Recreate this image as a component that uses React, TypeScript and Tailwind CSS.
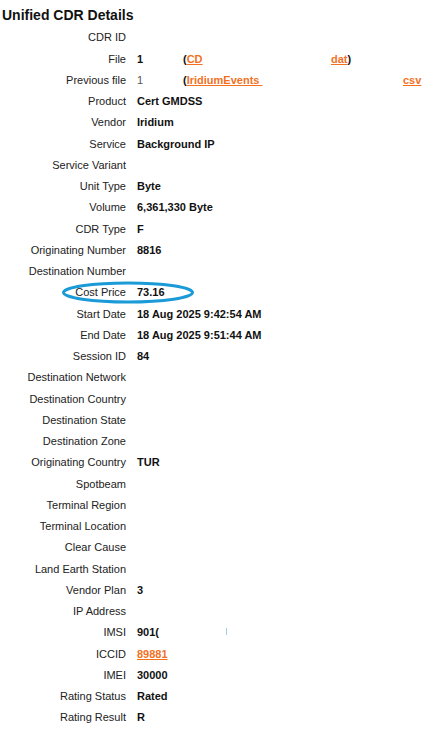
import type { ReactNode } from "react"

type Row = { label: string; value?: ReactNode; ring?: boolean; mark?: boolean }

const link = "text-[#f2711f] underline underline-offset-1 font-bold"

const rows: Row[] = [
    { label: "CDR ID" },
    {
        label: "File",
        value: (
            <>
                <span className="inline-block w-[46px]">1</span>
                <span className="inline-block w-[148px]">
                    (<span className={link}>CD</span>
                </span>
                <span className={link}>dat</span>)
            </>
        ),
    },
    {
        label: "Previous file",
        value: (
            <>
                <span className="inline-block w-[46px] font-normal text-[#555]">1</span>
                <span className="inline-block w-[220px]">
                    (<span className={link}>IridiumEvents&nbsp;</span>
                </span>
                <span className={link}>csv</span>
            </>
        ),
    },
    { label: "Product", value: "Cert GMDSS" },
    { label: "Vendor", value: "Iridium" },
    { label: "Service", value: "Background IP" },
    { label: "Service Variant" },
    { label: "Unit Type", value: "Byte" },
    { label: "Volume", value: "6,361,330 Byte" },
    { label: "CDR Type", value: "F" },
    { label: "Originating Number", value: "8816" },
    { label: "Destination Number" },
    { label: "Cost Price", value: "73.16", ring: true },
    { label: "Start Date", value: "18 Aug 2025 9:42:54 AM" },
    { label: "End Date", value: "18 Aug 2025 9:51:44 AM" },
    { label: "Session ID", value: "84" },
    { label: "Destination Network" },
    { label: "Destination Country" },
    { label: "Destination State" },
    { label: "Destination Zone" },
    { label: "Originating Country", value: "TUR" },
    { label: "Spotbeam" },
    { label: "Terminal Region" },
    { label: "Terminal Location" },
    { label: "Clear Cause" },
    { label: "Land Earth Station" },
    { label: "Vendor Plan", value: "3" },
    { label: "IP Address" },
    { label: "IMSI", value: "901(", mark: true },
    { label: "ICCID", value: <span className={link}>89881</span> },
    { label: "IMEI", value: "30000" },
    { label: "Rating Status", value: "Rated" },
    { label: "Rating Result", value: "R" },
]

export default function App() {
    return (
        <div
            className="w-[422px] h-[729px] overflow-hidden bg-white text-[#222]"
            style={{ fontFamily: "'Liberation Sans', Arial, sans-serif" }}
        >
            <h1 className="pl-[2px] pt-[5px] h-[27px] text-[14px] font-bold leading-[20px] text-[#111]">
                Unified CDR Details
            </h1>

            <div className="flex flex-col">
                {rows.map((row) => (
                    <div key={row.label} className="relative flex items-center h-[21.25px] text-[11px] whitespace-nowrap">
                        <div className="w-[126px] shrink-0 text-right">{row.label}</div>
                        <div className="pl-[11px] font-bold text-[#111]">{row.value}</div>

                        {row.ring && (
                            <svg className="absolute left-[61px] top-[-1px]" width="134" height="23" viewBox="0 0 134 23">
                                <ellipse cx="67" cy="11.5" rx="64.5" ry="9.5" fill="none" stroke="#1b9ad8" strokeWidth="3" />
                            </svg>
                        )}
                        {row.mark && <span className="absolute left-[226px] top-[6px] w-px h-[7px] bg-[#9fd0ee]" />}
                    </div>
                ))}
            </div>
        </div>
    )
}
